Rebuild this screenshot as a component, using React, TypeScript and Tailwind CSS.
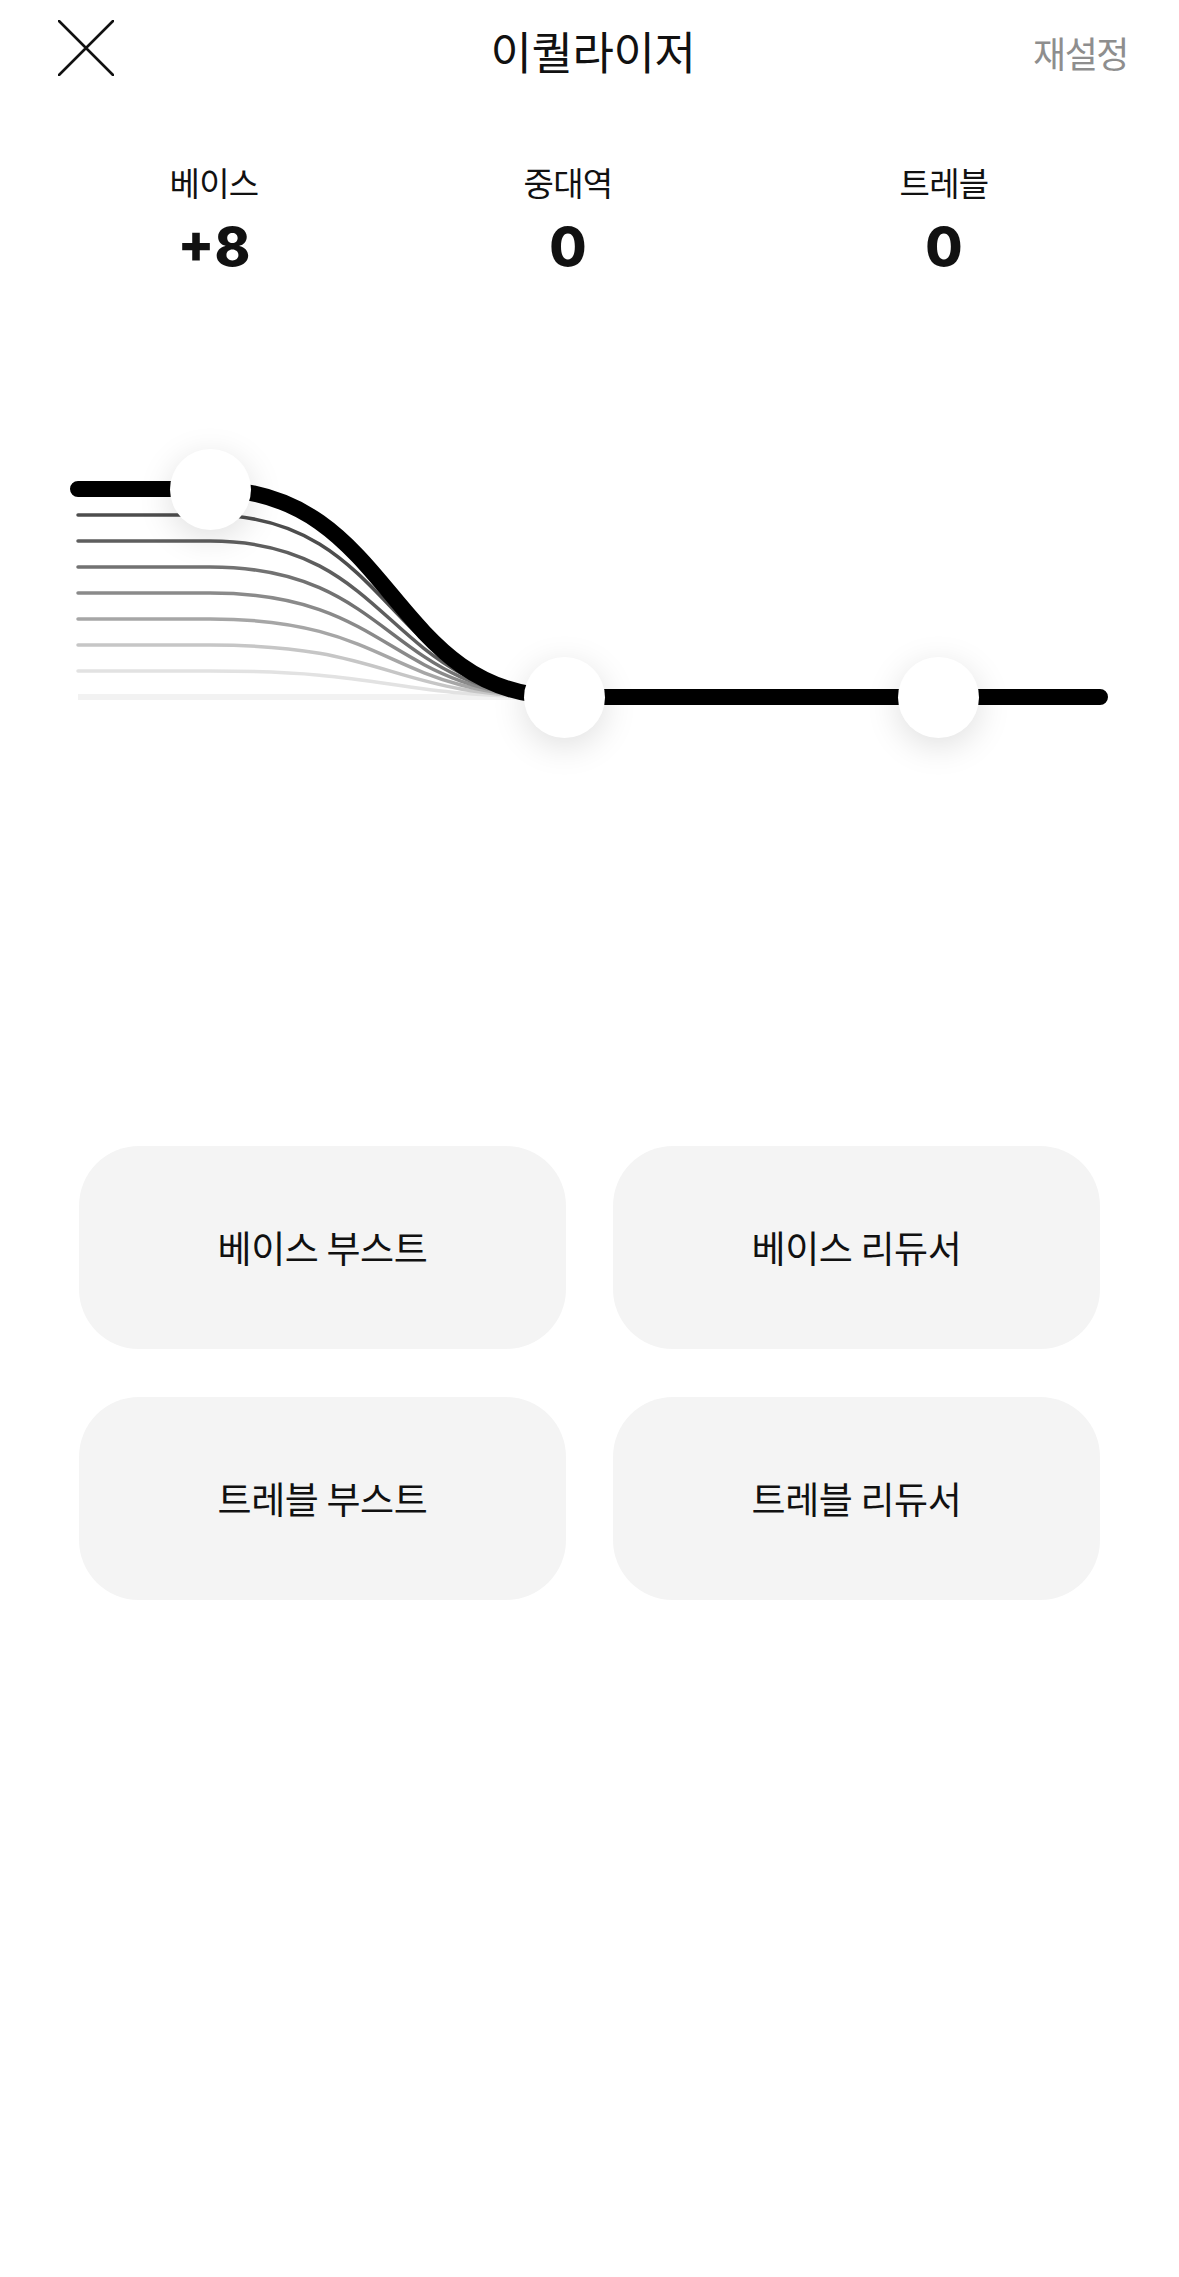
import React from "react";

const BANDS = [
  { label: "베이스", value: "+8", ml: "ml-[134px]" },
  { label: "중대역", value: "0", ml: "ml-[194px]" },
  { label: "트레블", value: "0", ml: "ml-[216px]" },
];

const PRESETS = ["베이스 부스트", "베이스 리듀서", "트레블 부스트", "트레블 리듀서"];

// graph geometry (svg coords, svg starts ~409px down the page)
const START_X = 210;
const END_X = 564;
const BASE_Y = 296;
const STEP = 26;
const MID_X = (START_X + END_X) / 2;

// level 7 .. 1 ghost curves, darkest first
const GHOSTS = [
  { level: 7, color: "#4d4d4d" },
  { level: 6, color: "#5e5e5e" },
  { level: 5, color: "#727272" },
  { level: 4, color: "#8a8a8a" },
  { level: 3, color: "#a6a6a6" },
  { level: 2, color: "#c6c6c6" },
  { level: 1, color: "#e2e2e2" },
];

function curve(level: number, fromX: number) {
  const y = BASE_Y - level * STEP;
  return `M ${fromX} ${y} L ${START_X} ${y} C ${MID_X + 8} ${y} ${MID_X} ${BASE_Y} ${END_X} ${BASE_Y}`;
}

function Knob({ x, y }: { x: number; y: number }) {
  return (
    <div
      className="absolute w-[81px] h-[81px] -ml-[40px] -mt-[40px] rounded-full bg-white shadow-[0_8px_34px_rgba(0,0,0,0.13)]"
      style={{ left: x, top: y }}
    />
  );
}

function CloseIcon() {
  return (
    <svg width="56" height="56" viewBox="0 0 56 56" fill="none">
      <path d="M1 1 L55 55 M55 1 L1 55" stroke="#111" strokeWidth="2.6" strokeLinecap="round" />
    </svg>
  );
}

export default function App() {
  return (
    <div className="w-[1179px] h-[2277px] bg-white text-[#111] font-['Noto_Sans_CJK_KR','Noto_Sans',sans-serif]">
      <header className="grid grid-cols-[1fr_auto_1fr] items-center h-[100px] pl-[58px] pr-[51px]">
        <button className="justify-self-start -mt-[4px]">
          <CloseIcon />
        </button>
        <h1 className="text-[45px] leading-none tracking-[-0.01em] font-normal">이퀄라이저</h1>
        <button className="justify-self-end text-[36px] leading-none tracking-[-0.04em] text-[#8e8e8e] mt-[4px]">
          재설정
        </button>
      </header>

      <div className="flex mt-[62px]">
        {BANDS.map((b) => (
          <div key={b.label} className={`w-[160px] flex flex-col items-center ${b.ml}`}>
            <span className="text-[33px] leading-[40px] tracking-[-0.02em]">{b.label}</span>
            <span className="mt-[16px] text-[54px] leading-[58px] font-extrabold font-['Inter',sans-serif]">
              {b.value}
            </span>
          </div>
        ))}
      </div>

      <div className="relative mt-[125px] h-[400px]">
        <svg width="1179" height="400" viewBox="0 0 1179 400" fill="none" className="block">
          <path d={`M 78 ${BASE_Y} L ${END_X} ${BASE_Y}`} stroke="#f2f2f2" strokeWidth="6" />
          {GHOSTS.slice()
            .reverse()
            .map((g) => (
              <path
                key={g.level}
                d={curve(g.level, 78)}
                stroke={g.color}
                strokeWidth="3.5"
                strokeLinecap="round"
              />
            ))}
          <path
            d={`${curve(8, 78)} L 1100 ${BASE_Y}`}
            stroke="#000"
            strokeWidth="16"
            strokeLinecap="round"
            strokeLinejoin="round"
          />
        </svg>
        <Knob x={210} y={BASE_Y - 8 * STEP} />
        <Knob x={564} y={BASE_Y} />
        <Knob x={938} y={BASE_Y} />
      </div>

      <div className="grid grid-cols-2 w-[1021px] ml-[79px] mt-[345px] gap-x-[47px] gap-y-[48px]">
        {PRESETS.map((p) => (
          <button
            key={p}
            className="h-[203px] rounded-[60px] bg-[#f4f4f4] flex items-center justify-center text-[37px] tracking-[-0.01em] leading-none"
          >
            {p}
          </button>
        ))}
      </div>
    </div>
  );
}
